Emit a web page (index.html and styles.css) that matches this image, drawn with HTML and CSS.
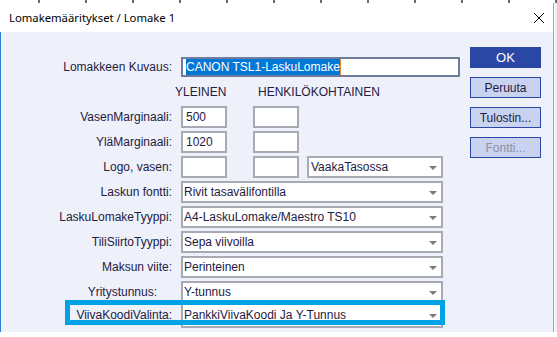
FILE: index.html
```html
<!DOCTYPE html>
<html lang="fi">
<head>
    <meta charset="UTF-8">
    <meta name="viewport" content="width=device-width, initial-scale=1.0">
    <title>Lomakemääritykset</title>
    <link rel="stylesheet" href="styles.css">
</head>
<body>
    <div class="strip"></div>
    <div class="screen">
        <div class="window">
            <div class="titlebar">
                <span class="title">Lomakemääritykset / Lomake 1</span>
                <svg class="close" width="12" height="12" viewBox="0 0 12 12">
                    <path d="M1 1 L11 11 M11 1 L1 11" stroke="#000" stroke-width="1" fill="none"/>
                </svg>
            </div>
            <div class="dialog">
                <div class="form">
                    <div class="row row-desc">
                        <label class="lbl">Lomakkeen Kuvaus:</label>
                        <div class="box desc"><span class="sel">CANON TSL1-LaskuLomake</span></div>
                    </div>
                    <div class="row heads">
                        <span class="lbl"></span>
                        <span class="head head1">YLEINEN</span>
                        <span class="head">HENKILÖKOHTAINEN</span>
                    </div>
                    <div class="row">
                        <label class="lbl">VasenMarginaali:</label>
                        <div class="box small first">500</div>
                        <div class="box small"></div>
                    </div>
                    <div class="row">
                        <label class="lbl">YläMarginaali:</label>
                        <div class="box small first">1020</div>
                        <div class="box small"></div>
                    </div>
                    <div class="row">
                        <label class="lbl">Logo, vasen:</label>
                        <div class="box small first"></div>
                        <div class="box small"></div>
                        <div class="combo half"><span class="val">VaakaTasossa</span><span class="arrow"></span></div>
                    </div>
                    <div class="row">
                        <label class="lbl">Laskun fontti:</label>
                        <div class="combo"><span class="val">Rivit tasavälifontilla</span><span class="arrow"></span></div>
                    </div>
                    <div class="row">
                        <label class="lbl">LaskuLomakeTyyppi:</label>
                        <div class="combo"><span class="val">A4-LaskuLomake/Maestro TS10</span><span class="arrow"></span></div>
                    </div>
                    <div class="row">
                        <label class="lbl">TiliSiirtoTyyppi:</label>
                        <div class="combo"><span class="val">Sepa viivoilla</span><span class="arrow"></span></div>
                    </div>
                    <div class="row">
                        <label class="lbl">Maksun viite:</label>
                        <div class="combo"><span class="val">Perinteinen</span><span class="arrow"></span></div>
                    </div>
                    <div class="row">
                        <label class="lbl lbl-indent">Yritystunnus:</label>
                        <div class="combo"><span class="val">Y-tunnus</span><span class="arrow"></span></div>
                    </div>
                    <div class="row row-last">
                        <label class="lbl">ViivaKoodiValinta:</label>
                        <div class="combo"><span class="val">PankkiViivaKoodi Ja Y-Tunnus</span><span class="arrow"></span></div>
                    </div>
                </div>
                <div class="buttons">
                    <button class="btn btn-ok">OK</button>
                    <button class="btn">Peruuta</button>
                    <button class="btn">Tulostin...</button>
                    <button class="btn btn-off">Fontti...</button>
                </div>
                <div class="highlight"></div>
            </div>
        </div>
        <div class="behind"></div>
    </div>
</body>
</html>
```

FILE: styles.css
```css
body {
    margin: 0;
    width: 557px;
    height: 337px;
    overflow: hidden;
    background-color: #ffffff;
    font-family: 'Liberation Sans', Arial, sans-serif;
    font-size: 12px;
    color: #1e2044;
}

.strip {
    height: 3px;
    background: repeating-linear-gradient(
        90deg,
        #ffffff 0px,
        #ffffff 38px,
        #6a6a6a 38px,
        #6a6a6a 40px,
        #ffffff 40px,
        #ffffff 47px
    );
}

.screen {
    display: flex;
}

.window {
    width: 553px;
    border-right: 1px solid #a6a6a6;
}

.behind {
    flex: 1;
    background-color: #e9eef7;
    border-left: 1px solid #ffffff;
}

.titlebar {
    height: 29px;
    display: flex;
    align-items: center;
    justify-content: space-between;
    background-color: #ffffff;
    padding-left: 9px;
    padding-right: 8px;
}

.title {
    font-family: 'Noto Sans', sans-serif;
    font-size: 11.3px;
    color: #000000;
    margin-top: -1px;
}

.close {
    margin-top: 1px;
}

.dialog {
    position: relative;
    height: 300px;
    overflow: hidden;
    display: flex;
    align-items: flex-start;
    background-color: #eef1f9;
    border-left: 1px solid #2b7fd6;
}

.form {
    padding-top: 25px;
}

.row {
    display: flex;
    align-items: center;
    height: 22px;
    margin-bottom: 3px;
}

.row-desc {
    height: 20px;
    margin-bottom: 8px;
}

.row-last {
    margin-top: -3px;
    height: 23px;
}

.row-last .combo {
    height: 25px;
    margin-top: 2px;
    padding-bottom: 2px;
}

.heads {
    height: 14px;
    margin-bottom: 7px;
}

.lbl {
    width: 171px;
    padding-right: 9px;
    text-align: right;
    flex-shrink: 0;
    box-sizing: content-box;
}

.lbl-indent {
    width: 156px;
    padding-right: 24px;
}

.head {
    color: #1e2044;
}

.head1 {
    width: 83px;
    margin-left: -6px;
}

.box {
    box-sizing: border-box;
    height: 22px;
    border: 2px solid #a7aab3;
    background-color: #ffffff;
    padding-left: 3px;
    display: flex;
    align-items: center;
}

.small {
    width: 46px;
}

.first {
    margin-right: 26px;
}

.desc {
    width: 279px;
    height: 20px;
    border-color: #6f7c9c;
    padding-left: 3px;
}

.sel {
    background-color: #0078d7;
    color: #ffffff;
    line-height: 16px;
    border-right: 1px solid #e08a2c;
}

.combo {
    box-sizing: border-box;
    width: 262px;
    height: 22px;
    border: 2px solid #a7aab3;
    background-color: #ffffff;
    padding-left: 1px;
    padding-right: 4px;
    display: flex;
    align-items: center;
}

.half {
    width: 136px;
    margin-left: 8px;
    padding-left: 2px;
}

.val {
    flex: 1;
    white-space: nowrap;
}

.arrow {
    width: 0;
    height: 0;
    border-left: 4px solid transparent;
    border-right: 4px solid transparent;
    border-top: 4px solid #7b7b7b;
    margin-top: 2px;
}

.buttons {
    display: flex;
    flex-direction: column;
    padding-top: 15px;
    margin-left: 10px;
}

.btn {
    width: 71px;
    height: 21px;
    margin: 0 0 9px 0;
    padding: 0;
    border: 1px solid #2b47a6;
    background-color: #c9d3ef;
    color: #1e2044;
    font-family: 'Liberation Sans', Arial, sans-serif;
    font-size: 12px;
}

.btn-ok {
    background-color: #2b47a6;
    color: #ffffff;
    font-size: 13px;
}

.btn-off {
    color: #8a90a6;
}

.highlight {
    position: absolute;
    left: 64px;
    top: 268px;
    width: 380px;
    height: 25px;
    box-sizing: border-box;
    border: 5px solid #00a2e6;
}
```
